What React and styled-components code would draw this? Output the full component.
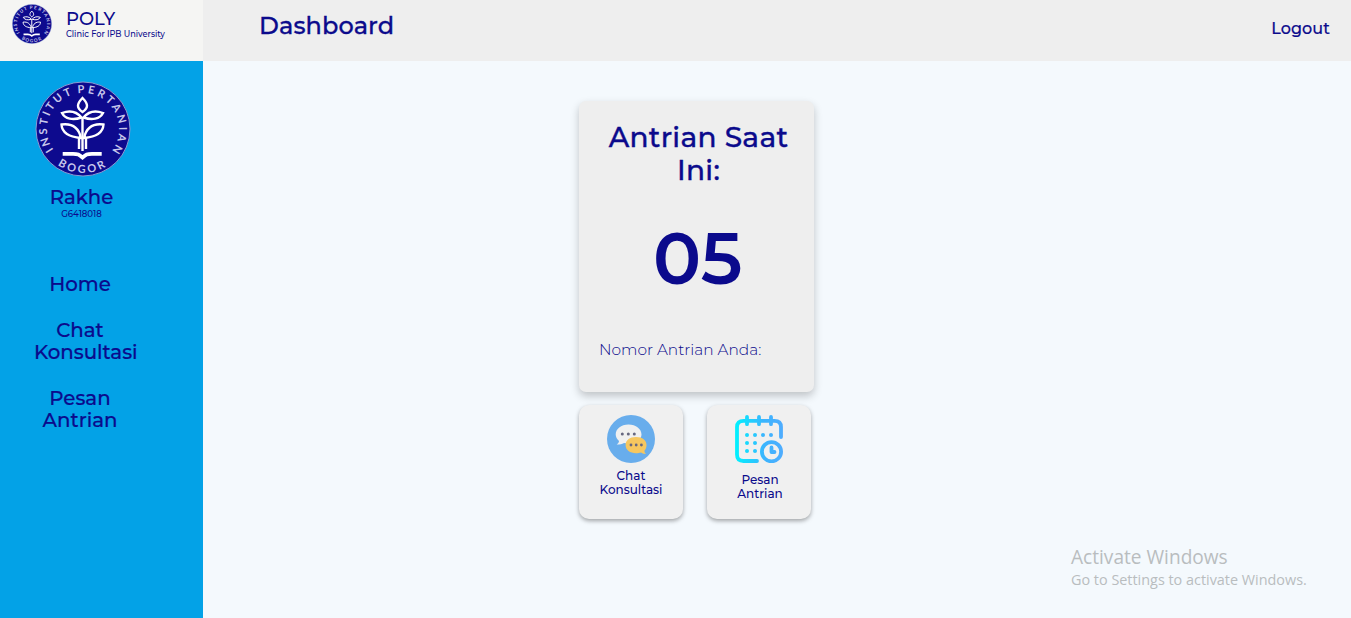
import React from "react";
import styled, { createGlobalStyle } from "styled-components";

const GlobalStyle = createGlobalStyle`
  * { box-sizing: border-box; }
  body {
    margin: 0;
    background: #f4f9fd;
    color: #0b0a8c;
    font-family: Montserrat, Inter, "Liberation Sans", sans-serif;
  }
`;

const Page = styled.div`
  display: grid;
  grid-template: 61px 1fr / 203px 1fr;
  height: 618px;
  overflow: hidden;
`;

const Brand = styled.div`
  display: flex;
  gap: 14px;
  padding: 4px 0 0 12px;
  background: #f5f5f3;
`;

const BrandText = styled.div`
  display: flex;
  flex-direction: column;
  padding-top: 4px;
`;

const Label = styled.span`
  display: block;
  width: max-content;
  font-size: ${(p) => p.$size}px;
  line-height: ${(p) => p.$line}px;
  font-weight: ${(p) => p.$weight || 500};
  letter-spacing: ${(p) => p.$track || 0}px;
  -webkit-text-stroke: ${(p) => p.$stroke || 0}px currentColor;
  white-space: nowrap;
`;

const Header = styled.header`
  display: flex;
  justify-content: space-between;
  padding: 10px 21px 0 56px;
  background: #eeeeee;
`;

const LogoutLink = styled.div`
  padding-top: 9px;
`;

const Sidebar = styled.aside`
  background: #03a2e7;
`;

const Profile = styled.div`
  display: flex;
  flex-direction: column;
  align-items: center;
  gap: 8px;
  width: 96px;
  margin: 20px 0 0 35px;
`;

const Identity = styled.div`
  display: flex;
  flex-direction: column;
  align-items: center;
  width: 93px;
  align-self: flex-start;
`;

const Nav = styled.nav`
  display: flex;
  flex-direction: column;
  gap: 24px;
  width: 92px;
  margin: 54px 0 0 34px;
`;

const NavItem = styled.div`
  display: flex;
  flex-direction: column;
  align-items: safe center;
`;

const Main = styled.main`
  display: flex;
  flex-direction: column;
  gap: 13px;
  width: 235px;
  padding-top: 40px;
  margin-left: 376px;
`;

const QueueCard = styled.section`
  display: flex;
  flex-direction: column;
  align-items: center;
  height: 291px;
  padding: 20px 0 0 4px;
  border-radius: 7px;
  background: #eeeeee;
  box-shadow: 0 4px 8px rgba(0, 0, 0, 0.22);
`;

const QueueNumber = styled.div`
  margin: 32px 2px 0 0;
`;

const QueueNote = styled.div`
  align-self: flex-start;
  margin: 41px 0 0 16px;
`;

const Actions = styled.div`
  display: flex;
  gap: 24px;
`;

const ActionCard = styled.div`
  display: flex;
  flex-direction: column;
  align-items: center;
  width: 104px;
  height: 114px;
  padding-top: 10px;
  border-radius: 10px;
  background: #f0f0f0;
  box-shadow: 0 2px 4px rgba(0, 0, 0, 0.34);
`;

const ActionText = styled.div`
  display: flex;
  flex-direction: column;
  align-items: center;
  margin: ${(p) => p.$gap}px 0 0 ${(p) => p.$indent || 0}px;
`;

const Watermark = styled.div`
  position: absolute;
  left: 1071px;
  top: 545px;
  color: #b9bdbf;
  font-family: "Segoe UI", "Open Sans", sans-serif;
`;

const Svg = styled.svg`
  display: block;
  flex: none;
`;

const RingText = styled.text`
  font: 700 11px Lato, "Liberation Sans", sans-serif;
  fill: #c8c8ec;
`;

const Leaf = styled.path`
  fill: none;
  stroke: #fff;
  stroke-width: 2.4;
`;

function Crest({ size, id }) {
  return (
    <Svg width={size} height={size} viewBox="0 0 96 96">
      <defs>
        <path id={`${id}-top`} d="M20.4 71.1A36 36 0 1 1 75.6 71.1" />
        <path id={`${id}-bottom`} d="M4 48A44 44 0 0 0 92 48" />
      </defs>
      <circle cx="48" cy="48" r="47" fill="#0d0a8e" stroke="#8a9bd3" strokeWidth="1" />
      <RingText textLength="67">
        <textPath href={`#${id}-top`} startOffset="3">INSTITUT</textPath>
      </RingText>
      <RingText textLength="85">
        <textPath href={`#${id}-top`} startOffset="76">PERTANIAN</textPath>
      </RingText>
      <RingText textLength="51">
        <textPath href={`#${id}-bottom`} startOffset="42">BOGOR</textPath>
      </RingText>
      <Leaf d="M47.500 17C41.500 23 41.500 27 47.500 31C53.500 27 53.500 23 47.500 17Z" />
      <Leaf d="M27 32C35 29 42 31 46.500 36.500C38 39.500 30 38 27 32ZM68 32C60 29 53 31 48.500 36.500C57 39.500 65 38 68 32Z" />
      <Leaf d="M26.500 43.500C38 42 44 48 46 57C34 56 27 52 26.500 43.500ZM68.500 43.500C57 42 51 48 49 57C61 56 68 52 68.500 43.500Z" />
      <Leaf d="M47.500 36V70M44 57V68M51 57V68" />
      <path d="M27.700 72.800H38C43 72.800 44 73.500 47.500 76.500C51 73.500 52 72.800 57 72.800H66.700" fill="none" stroke="#fff" strokeWidth="3.800" />
    </Svg>
  );
}

function ChatIcon() {
  return (
    <Svg width="48" height="48" viewBox="0 0 48 48">
      <circle cx="24" cy="24" r="24" fill="#68adec" />
      <path d="M21.500 9.500C14 9.500 8.700 14 8.700 19.500C8.700 22 10 24.300 12 26C12 27.500 11 28.700 9.700 29.500C13 29.500 15 29 17 28C28 30 34.500 25 34.500 19.500C34.500 14 29 9.500 21.500 9.500Z" fill="#f0f0f0" />
      <path d="M29 22C22.500 22 18.600 25.500 18.600 30C18.600 35 23 38.200 29 38.200C31 38.200 32.500 38 34 37.500C35.500 38.500 37 39 39 38.700C37.800 38 37.500 37 37.400 35.800C39 34.200 39.500 32 39.500 30C39.500 25.500 35.500 22 29 22Z" fill="#f6c75f" />
      <g fill="#66677f">
        <circle cx="15.300" cy="19" r="1.500" /><circle cx="21.300" cy="19" r="1.500" /><circle cx="27.300" cy="19" r="1.500" />
        <circle cx="24" cy="30" r="1.400" /><circle cx="29.200" cy="30" r="1.400" /><circle cx="34.400" cy="30" r="1.400" />
      </g>
    </Svg>
  );
}

function CalendarIcon() {
  const dots = [
    [12, 20], [20, 20], [28, 20], [36, 20],
    [12, 28], [20, 28],
    [12, 36], [20, 36],
  ];
  return (
    <Svg width="48" height="48" viewBox="0 0 48 48">
      <defs>
        <linearGradient id="sky" gradientUnits="userSpaceOnUse" x1="0" y1="0" x2="48" y2="0">
          <stop offset="0" stopColor="#00f2fe" />
          <stop offset=".6" stopColor="#3bb5fe" />
          <stop offset="1" stopColor="#4facfe" />
        </linearGradient>
      </defs>
      <g fill="none" stroke="url(#sky)" strokeWidth="3.800" strokeLinecap="round">
        <path d="M22 46H8.500Q2 46 2 39.500V12Q2 5.800 8.500 5.800H39.500Q46 5.800 46 12V22" />
        <path d="M12 2V9.200M24.010 2L24 9.200M36 2V9.200" />
        <circle cx="36.500" cy="36.700" r="9.600" />
        <path d="M36.500 32.500V37H39.500" strokeLinejoin="round" />
      </g>
      <g fill="url(#sky)">
        {dots.map(([x, y]) => <circle key={`${x}-${y}`} cx={x} cy={y} r="2" />)}
      </g>
    </Svg>
  );
}

const NavLabel = ({ children }) => (
  <Label $size={19.8} $line={22} $stroke={0.2}>{children}</Label>
);

const ActionLabel = ({ children }) => (
  <Label $size={12} $line={14}>{children}</Label>
);

export default function App() {
  return (
    <>
      <GlobalStyle />
      <Page>
        <Brand>
          <Crest size={40} id="brand" />
          <BrandText>
            <Label $size={18} $line={22}>POLY</Label>
            <Label $size={8.2} $line={9}>Clinic For IPB University</Label>
          </BrandText>
        </Brand>
        <Header>
          <Label $size={24} $line={31} $track={0.1} $stroke={0.3}>Dashboard</Label>
          <LogoutLink>
            <Label $size={16} $line={20} $track={0.1} $stroke={0.15}>Logout</Label>
          </LogoutLink>
        </Header>
        <Sidebar>
          <Profile>
            <Crest size={96} id="profile" />
            <Identity>
              <Label $size={19.7} $line={24} $stroke={0.2}>Rakhe</Label>
              <Label $size={8.6} $line={10}>G6418018</Label>
            </Identity>
          </Profile>
          <Nav>
            <NavItem><NavLabel>Home</NavLabel></NavItem>
            <NavItem><NavLabel>Chat</NavLabel><NavLabel>Konsultasi</NavLabel></NavItem>
            <NavItem><NavLabel>Pesan</NavLabel><NavLabel>Antrian</NavLabel></NavItem>
          </Nav>
        </Sidebar>
        <Main>
          <QueueCard>
            <Label $size={28} $line={33} $track={0.3} $stroke={0.35}>Antrian Saat</Label>
            <Label $size={28} $line={33} $track={0.3} $stroke={0.35}>Ini:</Label>
            <QueueNumber>
              <Label $size={71.5} $line={80} $weight={600} $track={-0.5}>05</Label>
            </QueueNumber>
            <QueueNote>
              <Label $size={15.4} $line={20} $weight={300}>Nomor Antrian Anda:</Label>
            </QueueNote>
          </QueueCard>
          <Actions>
            <ActionCard>
              <ChatIcon />
              <ActionText $gap={6}>
                <ActionLabel>Chat</ActionLabel>
                <ActionLabel>Konsultasi</ActionLabel>
              </ActionText>
            </ActionCard>
            <ActionCard>
              <CalendarIcon />
              <ActionText $gap={10} $indent={2}>
                <ActionLabel>Pesan</ActionLabel>
                <ActionLabel>Antrian</ActionLabel>
              </ActionText>
            </ActionCard>
          </Actions>
        </Main>
      </Page>
      <Watermark>
        <Label $size={19.1} $line={25} $weight={400}>Activate Windows</Label>
        <Label $size={14.4} $line={20} $weight={400}>Go to Settings to activate Windows.</Label>
      </Watermark>
    </>
  );
}
